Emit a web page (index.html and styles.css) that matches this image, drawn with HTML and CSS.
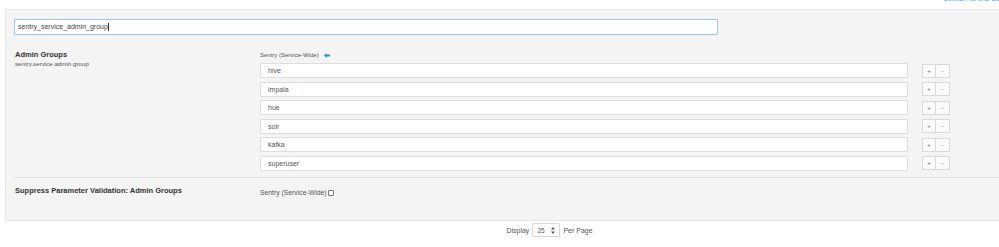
FILE: index.html
```html
<!DOCTYPE html>
<html>
<head>
<meta charset="utf-8">
<link rel="stylesheet" href="styles.css">
</head>
<body>
<div class="topbar"><a class="switch">Switch to the classic layout</a></div>
<div class="panel">
  <div class="search-wrap"><div class="search">sentry_service_admin_group<span class="caret"></span></div></div>
  <div class="row row-groups">
    <div class="label">
      <div class="name">Admin Groups</div>
      <div class="key">sentry.service.admin.group</div>
    </div>
    <div class="value">
      <div class="scope">Sentry (Service-Wide)
        <svg class="undo" width="6" height="5" viewBox="0 0 6 5"><path d="M0 2.5 L2.6 0 V1.6 H6 V3.4 H2.6 V5 Z" fill="#2f8fd0"/></svg>
      </div>
      <div class="list">
        <div class="item"><div class="field">hive</div><div class="btns"><span class="btn">+</span><span class="btn">-</span></div></div>
        <div class="item"><div class="field">impala</div><div class="btns"><span class="btn">+</span><span class="btn">-</span></div></div>
        <div class="item"><div class="field">hue</div><div class="btns"><span class="btn">+</span><span class="btn">-</span></div></div>
        <div class="item"><div class="field">solr</div><div class="btns"><span class="btn">+</span><span class="btn">-</span></div></div>
        <div class="item"><div class="field">kafka</div><div class="btns"><span class="btn">+</span><span class="btn">-</span></div></div>
        <div class="item"><div class="field">superuser</div><div class="btns"><span class="btn">+</span><span class="btn">-</span></div></div>
      </div>
    </div>
  </div>
  <div class="row row-suppress">
    <div class="label"><div class="name">Suppress Parameter Validation: Admin Groups</div></div>
    <div class="value"><span class="scope2">Sentry (Service-Wide)</span><span class="check"></span></div>
  </div>
</div>
<div class="footer">
  <span>Display</span>
  <span class="select">25<svg width="4" height="7" viewBox="0 0 4 7"><path d="M2 0 L4 2.6 H0 Z M2 7 L4 4.4 H0 Z" fill="#555"/></svg></span>
  <span>Per Page</span>
</div>
</body>
</html>
```
FILE: styles.css
```css
* { box-sizing: border-box; }
html, body { margin: 0; padding: 0; background: #fff; }
body {
  font-family: "Liberation Sans", Arial, sans-serif;
  color: #555;
  width: 999px;
  overflow: hidden;
}
.topbar {
  height: 9px;
  overflow: hidden;
  display: flex;
  justify-content: flex-end;
}
.switch {
  color: #4aa9dc;
  font-size: 8px;
  margin-top: -6px;
  margin-right: -40px;
  white-space: nowrap;
}
.panel {
  margin-left: 5px;
  width: 1010px;
  height: 212px;
  background: #f4f4f4;
  border: 1px solid #e6e6e6;
  border-right: none;
}
.search-wrap { padding: 9px 0 0 8px; }
.search {
  width: 704px;
  height: 16px;
  background: #fff;
  border: 1px solid #9ccbef;
  box-shadow: 0 0 1px #b9dcf5;
  border-radius: 1px;
  font-size: 7px;
  line-height: 14px;
  padding-left: 3px;
  color: #444;
}
.caret {
  display: inline-block;
  width: 1px;
  height: 8px;
  background: #333;
  vertical-align: -2px;
}
.row {
  display: grid;
  grid-template-columns: 245px 1fr;
  margin-left: 9px;
}
.row-groups { padding-top: 15px; padding-bottom: 6px; }
.label .name {
  font-size: 7.5px;
  font-weight: bold;
  color: #333;
  line-height: 9px;
}
.label .key {
  font-size: 6.2px;
  color: #555;
  line-height: 9px;
}
.scope {
  font-size: 6px;
  line-height: 8px;
  margin-top: 1px;
  height: 12px;
  display: flex;
  align-items: flex-start;
}
.undo { margin-left: 5px; margin-top: 1.5px; }
.list { display: flex; flex-direction: column; gap: 3.6px; }
.item { display: flex; align-items: center; height: 15px; }
.field {
  width: 648px;
  height: 15px;
  background: #fff;
  border: 1px solid #dedede;
  border-radius: 1px;
  font-size: 7px;
  line-height: 13px;
  padding-left: 7px;
  color: #555;
}
.btns { display: flex; margin-left: 14px; }
.btn {
  width: 14px;
  height: 14px;
  border: 1px solid #d9d9d9;
  background: #fafafa;
  font-size: 6px;
  line-height: 12px;
  text-align: center;
  color: #666;
}
.btn + .btn { border-left: none; }
.row-suppress {
  border-top: 1px solid #e2e2e2;
  height: 41px;
  padding-top: 8px;
}
.row-suppress .name { line-height: 10px; }
.row-suppress .value {
  display: flex;
  align-items: center;
  height: 14px;
  font-size: 6.8px;
}
.check {
  display: inline-block;
  width: 6px;
  height: 6px;
  border: 1px solid #777;
  border-radius: 1px;
  background: #fff;
  margin-left: 2px;
}
.footer {
  display: flex;
  justify-content: center;
  align-items: center;
  gap: 3px;
  padding-top: 2px;
  font-size: 7px;
  color: #555;
  margin-left: 100px;
}
.select {
  width: 28px;
  height: 14px;
  border: 1px solid #d6d6d6;
  border-radius: 2px;
  background: #fff;
  display: flex;
  align-items: center;
  justify-content: space-between;
  padding: 0 4px;
  font-size: 6.5px;
}
```
